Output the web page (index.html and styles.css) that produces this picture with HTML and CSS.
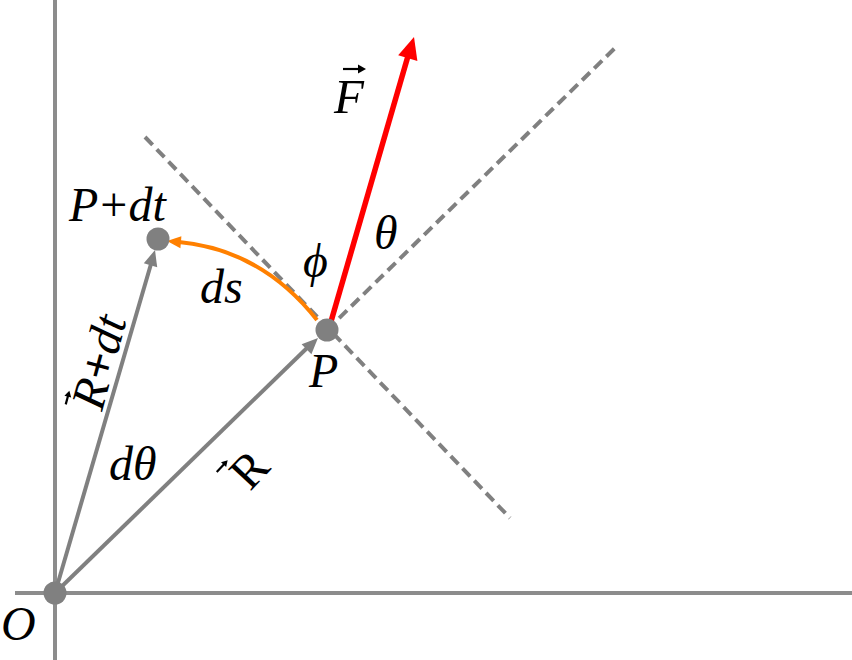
FILE: index.html
```html
<!DOCTYPE html>
<html>
<head>
<meta charset="utf-8">
<link rel="stylesheet" href="styles.css">
</head>
<body>
<svg class="diagram" width="852" height="660" viewBox="0 0 852 660" xmlns="http://www.w3.org/2000/svg">
  <!-- axes -->
  <line class="axis" x1="55" y1="0" x2="55" y2="660"/>
  <line class="axis" x1="15" y1="593" x2="852" y2="593"/>
  <!-- dashed guide lines -->
  <line class="dash" x1="145" y1="137" x2="510" y2="518"/>
  <line class="dash" x1="327" y1="330" x2="615" y2="48"/>
  <!-- gray vectors -->
  <line class="vec" x1="55" y1="593" x2="151" y2="264"/>
  <polygon class="head-gray" points="155,250 157.2,267.3 143.8,263.3"/>
  <line class="vec" x1="55" y1="593" x2="307" y2="348"/>
  <polygon class="head-gray" points="318,338 311.4,354.2 301.6,344.2"/>
  <!-- orange arc -->
  <path class="arc" d="M317,320 Q262,250 179,242"/>
  <polygon class="head-orange" points="167,241 181.4,236.2 180.4,248.2"/>
  <!-- red force -->
  <line class="force" x1="330" y1="325" x2="408" y2="56"/>
  <polygon class="head-red" points="414,37 417.4,60.9 398.2,55.3"/>
  <!-- points -->
  <circle class="dot" cx="55" cy="593" r="11.5"/>
  <circle class="dot" cx="327" cy="330" r="11.5"/>
  <circle class="dot" cx="158" cy="239" r="11.5"/>
  <!-- labels -->
  <text class="lbl" x="69" y="221">P<tspan class="plus" dx="2">+</tspan><tspan dx="1">dt</tspan></text>
  <text class="lbl" x="200" y="303">ds</text>
  <text class="lbl" x="303" y="277">ϕ</text>
  <text class="lbl" x="374" y="249">θ</text>
  <text class="lbl" x="309" y="387">P</text>
  <text class="lbl" x="109" y="480">dθ</text>
  <text class="lbl" x="1" y="640">O</text>
  <text class="lbl big" x="334" y="113">F</text>
  <path class="hat" d="M343,69 H360"/>
  <polygon class="hat-head" points="366,69 358,64.5 358,73.5"/>
  <g transform="translate(102,412) rotate(-75)">
    <text class="lbl" x="0" y="0">R<tspan class="plus bold" dx="1">+</tspan><tspan dx="0">dt</tspan></text>
    <path class="hat" d="M-2,-37 H8"/>
    <polygon class="hat-head" points="12,-37 6,-40.5 6,-33.5"/>
  </g>
  <g transform="translate(250,492) rotate(-47)">
    <text class="lbl upright" x="0" y="0">R</text>
    <path class="hat" d="M-8,-38 H4"/>
    <polygon class="hat-head" points="8,-38 2,-41.5 2,-34.5"/>
  </g>
</svg>
</body>
</html>
```
FILE: styles.css
```css
html, body {
  margin: 0;
  padding: 0;
  background: #ffffff;
}
.diagram {
  display: block;
}
.axis {
  stroke: #8c8c8c;
  stroke-width: 4;
}
.dash {
  stroke: #808080;
  stroke-width: 4;
  stroke-dasharray: 11 6;
}
.vec {
  stroke: #808080;
  stroke-width: 4;
}
.head-gray {
  fill: #808080;
}
.arc {
  fill: none;
  stroke: #ff8000;
  stroke-width: 4;
}
.head-orange {
  fill: #ff8000;
}
.force {
  stroke: #ff0000;
  stroke-width: 5.5;
}
.head-red {
  fill: #ff0000;
}
.dot {
  fill: #808080;
}
.lbl {
  font-family: "Liberation Serif", "DejaVu Serif", serif;
  font-style: italic;
  font-size: 48px;
  fill: #000000;
}
.big {
  font-size: 49px;
}
.plus {
  font-style: normal;
}
.bold {
  font-weight: bold;
}
.upright {
  font-style: normal;
}
.hat {
  stroke: #000000;
  stroke-width: 2.2;
  fill: none;
}
.hat-head {
  fill: #000000;
}
```
